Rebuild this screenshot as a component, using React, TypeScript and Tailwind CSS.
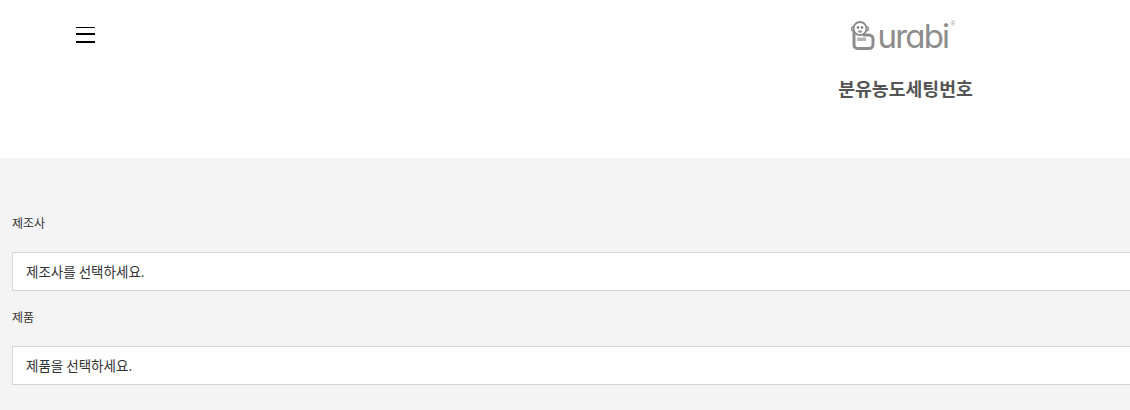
const kr = "font-['Noto_Sans_CJK_KR','Liberation_Sans',sans-serif]";

function Logo() {
  return (
    <div className="flex h-[34px] w-[110px] items-start text-[#8c8c8c]">
      <svg width="25" height="31" viewBox="0 0 25 31" fill="none" className="shrink-0">
        {/* monkey sitting in the B */}
        <path d="M3 9V25a3.500 3.500 0 0 0 3.500 3.500H18a4 4 0 0 0 4-4V19a4 4 0 0 0-4-4H12" stroke="#8c8c8c" strokeWidth="3" />
        <circle cx="2.500" cy="9" r="2" fill="#fff" stroke="#9a9a9a" strokeWidth="1.500" />
        <circle cx="15.500" cy="9" r="2" fill="#fff" stroke="#9a9a9a" strokeWidth="1.500" />
        <circle cx="9" cy="8.500" r="6.500" fill="#fff" stroke="#8c8c8c" strokeWidth="2" />
        <circle cx="7" cy="7.500" r="1.300" fill="#777" />
        <circle cx="11" cy="7.500" r="1.300" fill="#777" />
        <ellipse cx="9" cy="11.500" rx="2.200" ry="1.200" fill="#999" />
        <path d="M6 17.500h9v3.500H6z" fill="#b5b5b5" />
      </svg>
      <span className="ml-[2px] mt-[-4px] font-['Inter',sans-serif] text-[33px] font-normal leading-[40px] tracking-[-1.8px] [font-feature-settings:'cv11']">urabi</span>
      <span className="ml-[2px] font-['Liberation_Sans',sans-serif] text-[7px] leading-none text-[#aaaaaa]">®</span>
    </div>
  );
}

function Field({ label, placeholder }: { label: string; placeholder: string }) {
  return (
    <div>
      <div className="h-[18px] text-[12px] leading-[18px] text-[#333333]">{label}</div>
      <div className="mt-[20px] h-[39px] w-[1130px] border border-[#d5d5d5] bg-white pl-[13px] text-[13.5px] leading-[37px] text-[#333333]">
        {placeholder}
      </div>
    </div>
  );
}

export default function App() {
  return (
    <div className={`h-[410px] w-[1130px] overflow-hidden bg-[#f4f4f4] ${kr}`}>
      <header className="flex h-[158px] justify-between bg-white">
        <button className="ml-[76px] mt-[27px] h-[16px] w-[19px]">
          <span className="block h-[1px] w-[19px] bg-black" />
          <span className="mt-[5px] block h-[2px] w-[19px] bg-black" />
          <span className="mt-[6px] block h-[2px] w-[19px] bg-black" />
        </button>
        <div className="mr-[157px] flex w-[135px] flex-col items-center pt-[20px]">
          <Logo />
          <h1 className="mt-[21px] whitespace-nowrap text-[18.3px] font-bold leading-[26px] text-[#555555]">분유농도세팅번호</h1>
        </div>
      </header>
      <main className="flex flex-col gap-[17px] pl-[12px] pt-[56px]">
        <Field label="제조사" placeholder="제조사를 선택하세요." />
        <Field label="제품" placeholder="제품을 선택하세요." />
      </main>
    </div>
  );
}
